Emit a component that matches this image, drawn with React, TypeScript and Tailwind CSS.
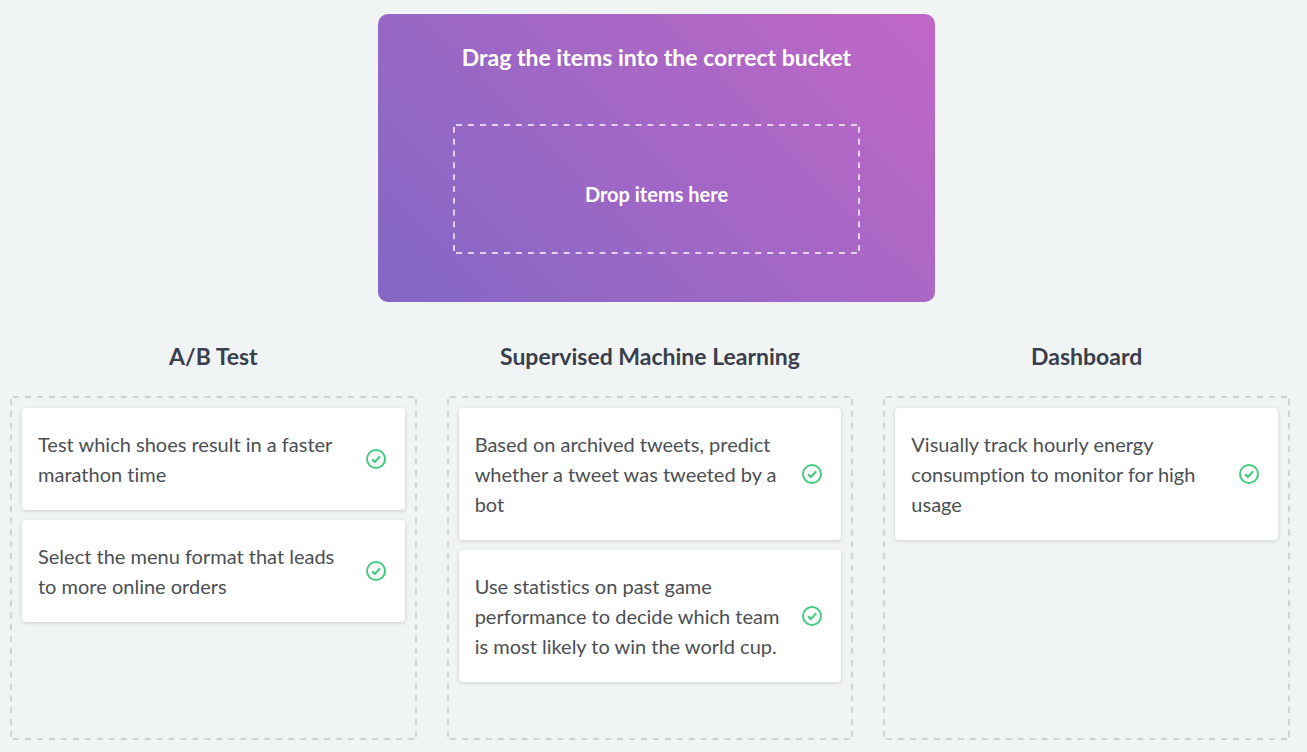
import type { ReactNode } from "react";

const buckets: { title: string; items: string[] }[] = [
  {
    title: "A/B Test",
    items: [
      "Test which shoes result in a faster marathon time",
      "Select the menu format that leads to more online orders",
    ],
  },
  {
    title: "Supervised Machine Learning",
    items: [
      "Based on archived tweets, predict whether a tweet was tweeted by a bot",
      "Use statistics on past game performance to decide which team is most likely to win the world cup.",
    ],
  },
  {
    title: "Dashboard",
    items: ["Visually track hourly energy consumption to monitor for high usage"],
  },
];

function CheckCircle() {
  return (
    <svg
      viewBox="0 0 20 20"
      className="size-5 shrink-0"
      fill="none"
      stroke="#43cb80"
      role="img"
      aria-label="Correct"
    >
      <circle cx="10" cy="10" r="9" strokeWidth="2" />
      <path d="M6 10.2 8.8 12.9 14.2 7.3" strokeWidth="2.2" />
    </svg>
  );
}

// Dashed outline with evenly rounded 6px dashes on all four sides.
function DropZone({ tone, children }: { tone: "light" | "gray"; children: ReactNode }) {
  const color =
    tone === "light"
      ? "[--dash:rgba(255,255,255,0.7)]"
      : "[--dash:#d0d3d4]";
  return (
    <div
      className={`${color} flex w-full flex-1 flex-col p-3 [background-image:linear-gradient(90deg,transparent_25%,var(--dash)_25%_75%,transparent_75%),linear-gradient(90deg,transparent_25%,var(--dash)_25%_75%,transparent_75%),linear-gradient(transparent_25%,var(--dash)_25%_75%,transparent_75%),linear-gradient(transparent_25%,var(--dash)_25%_75%,transparent_75%)] [background-position:0_0,0_100%,0_0,100%_0] [background-repeat:round_no-repeat,round_no-repeat,no-repeat_round,no-repeat_round] [background-size:12px_2px,12px_2px,2px_12px,2px_12px]`}
    >
      {children}
    </div>
  );
}

function Card({ text }: { text: string }) {
  return (
    <li className="flex items-center justify-between rounded bg-white py-[21px] pr-[19px] pl-4 shadow-[0_1px_4px_rgba(0,0,0,0.15)]">
      <p className="max-w-[310px] text-xl leading-[30px] text-[#4b4f53]">{text}</p>
      <CheckCircle />
    </li>
  );
}

export default function App() {
  return (
    <main className="flex min-h-screen flex-col bg-[#f0f4f5] pt-3.5 pb-3 font-['Lato',sans-serif] [font-variant-ligatures:none]">
      <div className="flex justify-center pl-1.5">
        <section className="flex w-full max-w-[557px] flex-col items-center rounded-[10px] bg-linear-[45deg,#8367c5,#c167c6] px-[75px] pt-7 pb-12 text-white">
          <h1 className="text-[23px] leading-[30px] font-bold whitespace-nowrap">
            Drag the items into the correct bucket
          </h1>
          <div className="mt-[52px] flex h-[130px] w-full">
            <DropZone tone="light">
              <p className="my-auto pt-2.5 text-center text-xl leading-[30px] font-bold">
                Drop items here
              </p>
            </DropZone>
          </div>
        </section>
      </div>
      <div className="mt-[39px] grid flex-1 grid-cols-3 gap-[30px] pr-[17px] pl-2.5">
        {buckets.map((bucket) => (
          <section key={bucket.title} className="flex flex-col">
            <h2 className="mb-[25px] text-center text-[23px] leading-[30px] font-bold text-[#3a3f4b]">
              {bucket.title}
            </h2>
            <DropZone tone="gray">
              <ul className="flex flex-col gap-2.5">
                {bucket.items.map((item) => (
                  <Card key={item} text={item} />
                ))}
              </ul>
            </DropZone>
          </section>
        ))}
      </div>
    </main>
  );
}
